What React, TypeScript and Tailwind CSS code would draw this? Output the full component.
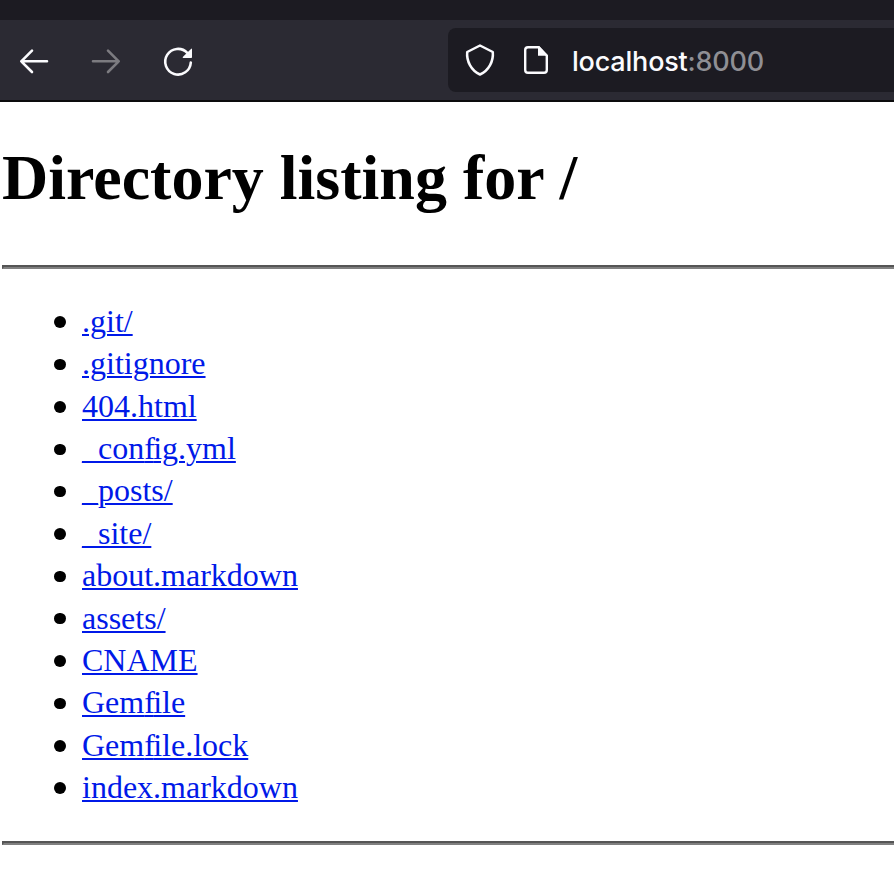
import React from "react";

const entries = [".git/", ".gitignore", "404.html", "_config.yml", "_posts/", "_site/", "about.markdown", "assets/", "CNAME", "Gemfile", "Gemfile.lock", "index.markdown"];

function Name({ text }: { text: string }) {
  const at = text.indexOf("fi");
  if (at < 0) return <>{text}</>;
  return <>{text.slice(0, at)}<span className="tracking-[-1.7px]">f</span>{text.slice(at + 1)}</>;
}

function Rule({ className }: { className: string }) {
  return <hr className={`h-1 border-2 border-r-0 border-t-[#555] border-l-[#555] border-b-[#808080] ${className}`} />;
}

export default function App() {
  return (
    <div className="h-[880px] w-full overflow-hidden bg-white text-black">
      <div className="h-5 bg-[#1c1b22]" />
      <header className="flex h-[82px] items-start border-b-2 border-[#0c0c0d] bg-[#2b2a33] text-[#fbfbfe]">
        <nav className="flex w-[448px] shrink-0 gap-8 pt-[22px] pl-[14px]">
          <svg className="size-10" viewBox="0 0 40 40" fill="none" stroke="currentColor" strokeWidth="2.6" strokeLinecap="round" strokeLinejoin="round"><path d="M33 19.3H7.3M18 8.6L7.3 19.3L18 30" /></svg>
          <svg className="size-10 text-[#7c7b80]" viewBox="0 0 40 40" fill="none" stroke="currentColor" strokeWidth="2.6" strokeLinecap="round" strokeLinejoin="round"><path d="M7 19.3H32.7M22 8.6L32.7 19.3L22 30" /></svg>
          <svg className="size-10" viewBox="0 0 40 40" fill="none" stroke="currentColor" strokeWidth="2.6" strokeLinecap="round"><path d="M29.3 10.9A12.8 12.8 0 1 0 32.8 20.5" /><path d="M34 7.2Q34 6 33 7L25 14.8Q24 16 25.4 16H33.2Q34 16 34 15.2Z" fill="currentColor" stroke="none" /></svg>
        </nav>
        <div className="mt-2 flex h-16 flex-1 items-center rounded-l-lg bg-[#1c1b22] pl-4">
          <svg className="h-8 w-8" viewBox="0 0 32 32" fill="none" stroke="currentColor" strokeWidth="2.5" strokeLinejoin="round"><path d="M16 1.5L28.8 8C29.6 17 25 26.5 16 30.5C7 26.5 2.4 17 3.2 8Z" /></svg>
          <svg className="ml-6 h-8 w-8" viewBox="0 0 32 32" fill="none" stroke="currentColor" strokeWidth="2.4" strokeLinejoin="round"><path d="M8 3.2H18.5L26.8 11.5V26Q26.8 28.8 24 28.8H8Q5.2 28.8 5.2 26V6Q5.2 3.2 8 3.2Z" /><path d="M18 2V11.8H28L19.2 2Z" fill="currentColor" stroke="none" /></svg>
          <span className="mt-1 ml-5 font-['Inter',sans-serif] text-[27px] font-medium tracking-[-0.2px]">localhost<span className="text-[#8f8f94]">:8000</span></span>
        </div>
      </header>
      <main className="pl-[2px] font-['Liberation_Serif',serif]">
        <h1 className="pt-10 text-[64px] leading-[72px] font-bold">Directory listing for /</h1>
        <Rule className="mt-[51px]" />
        <ul className="mt-[31px] pl-[52px] text-[32px] leading-[42.36px]">
          {entries.map((entry) => (
            <li key={entry} className="flex items-center">
              <span className="mt-[2px] mr-[16.5px] size-[11.5px] shrink-0 rounded-full bg-black" />
              <a href="#" className="text-[#0019e8] underline decoration-2 underline-offset-2"><Name text={entry} /></a>
            </li>
          ))}
        </ul>
        <Rule className="mt-[33px]" />
      </main>
    </div>
  );
}
